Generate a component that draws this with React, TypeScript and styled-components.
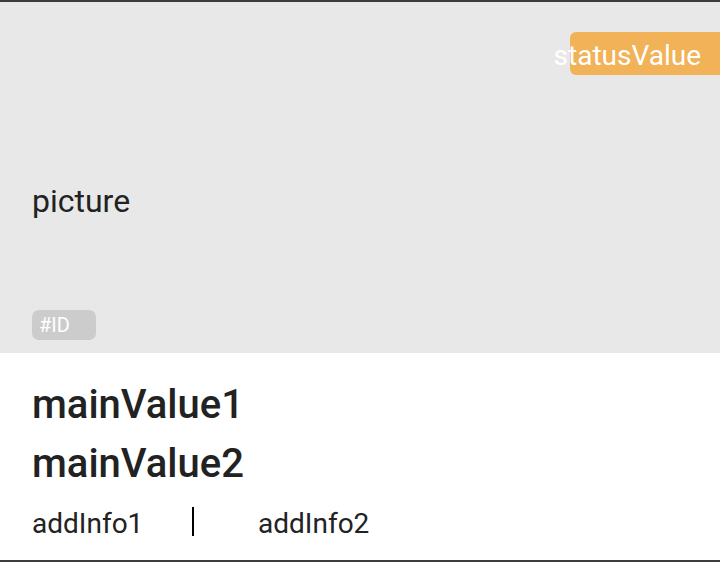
import React from "react";
import styled, { createGlobalStyle } from "styled-components";

const Global = createGlobalStyle`
  html, body { margin: 0; padding: 0; background: #ffffff; }
  body { font-family: Roboto, "Noto Sans", sans-serif; color: #222222; }
`;

const Card = styled.div`
  width: 720px;
  height: 562px;
  box-sizing: border-box;
  border-top: 2px solid #3c3c3c;
  border-bottom: 2px solid #3c3c3c;
  display: flex;
  flex-direction: column;
  overflow: hidden;
`;

const Picture = styled.div`
  position: relative;
  height: 351px;
  flex: none;
  background: #e8e8e8;
  display: flex;
  flex-direction: column;
  padding: 0 32px 13px;
  box-sizing: border-box;
`;

const PictureLabel = styled.div`
  margin-top: 179px;
  font-size: 32px;
  line-height: 40px;
  color: #222222;
`;

const IdBadge = styled.div`
  margin-top: auto;
  align-self: flex-start;
  width: 64px;
  height: 30px;
  box-sizing: border-box;
  padding-left: 7px;
  border-radius: 7px;
  background: #cccccc;
  color: #ffffff;
  font-size: 20px;
  line-height: 30px;
`;

const StatusBadge = styled.div`
  position: absolute;
  top: 30px;
  left: 570px;
  width: 160px;
  height: 43px;
  box-sizing: border-box;
  padding: 5px 29px 0 0;
  border-radius: 6px;
  background: #f1b258;
  display: flex;
  justify-content: flex-end;
  align-items: flex-start;
`;

const StatusText = styled.span`
  flex: none;
  white-space: nowrap;
  font-size: 28px;
  line-height: 38px;
  color: #ffffff;
`;

const Info = styled.div`
  flex: 1;
  display: flex;
  flex-direction: column;
  padding: 22px 32px 0;
`;

const MainValue = styled.div`
  font-size: 40px;
  font-weight: 500;
  line-height: 59px;
  color: #222222;
`;

const AddRow = styled.div`
  margin-top: 15px;
  display: flex;
  align-items: flex-start;
  font-size: 28px;
  line-height: 32px;
  color: #222222;
`;

const AddItem = styled.span<{ $w?: number }>`
  width: ${(p) => (p.$w ? `${p.$w}px` : "auto")};
`;

const Divider = styled.span`
  width: 2px;
  height: 29px;
  margin-top: -1px;
  background: #000000;
  margin-right: 64px;
`;

export default function App() {
  return (
    <>
      <Global />
      <Card>
        <Picture>
          <StatusBadge>
            <StatusText>statusValue</StatusText>
          </StatusBadge>
          <PictureLabel>picture</PictureLabel>
          <IdBadge>#ID</IdBadge>
        </Picture>
        <Info>
          <MainValue>mainValue1</MainValue>
          <MainValue>mainValue2</MainValue>
          <AddRow>
            <AddItem $w={160}>addInfo1</AddItem>
            <Divider />
            <AddItem>addInfo2</AddItem>
          </AddRow>
        </Info>
      </Card>
    </>
  );
}
